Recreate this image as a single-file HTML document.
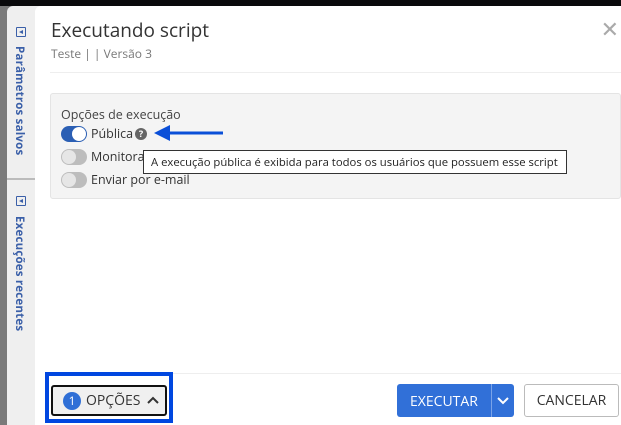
<!DOCTYPE html>
<html><head><meta charset="utf-8"><style>
*{box-sizing:border-box;margin:0;padding:0}
body{width:621px;height:425px;overflow:hidden;background:#6f6f6f;font-family:"Open Sans","Liberation Sans","DejaVu Sans",sans-serif;position:relative}
.top{position:absolute;left:0;top:0;width:621px;height:6px;background:#0a0a0c}
.bgl{position:absolute;left:0;top:6px;width:8px;height:419px;background:#7a7a7a}
.side{position:absolute;left:7px;top:6px;width:34px;height:419px;background:#efefef;border-radius:6px 0 0 0}
.side .sep{position:absolute;left:0;top:172px;width:28px;height:2px;background:#bbb}
.vt{position:absolute;writing-mode:vertical-rl;font-size:11.5px;font-weight:bold;color:#3a5fa8;letter-spacing:.2px}
.ico{position:absolute;width:10px;height:10px;border:1px solid #3a5fa8;border-radius:1px}
.ico:after{content:"";position:absolute;left:2px;top:2px;border-right:4px solid #3a5fa8;border-top:2px solid transparent;border-bottom:2px solid transparent}
.dlg{position:absolute;left:35px;top:6px;width:586px;height:419px;background:#fff;border-radius:6px 0 0 0}
h1{position:absolute;left:16px;top:11px;font-size:19px;font-weight:normal;color:#333}
.sub{position:absolute;left:16px;top:39px;font-size:12px;color:#777}
.x{position:absolute;right:2px;top:12px;font-size:22px;color:#aaa;line-height:1}
.hr{position:absolute;left:15px;right:0;height:1px;background:#eee}
.box{position:absolute;left:15px;top:87px;width:571px;height:106px;background:#f4f4f4;border:1px solid #e4e4e4;border-radius:3px}
.lbl{position:absolute;left:10px;top:12px;font-size:12.5px;color:#444}
.row{position:absolute;left:10px;font-size:12.5px;color:#333;display:flex;align-items:center}
.tg{width:26px;height:16px;border-radius:8px;background:#bdbdbd;position:relative;margin-right:4px}
.tg:after{content:"";position:absolute;left:1px;top:1px;width:14px;height:14px;border-radius:50%;background:#e6e6e6}
.tg.on{background:#2b5fb4}.tg.on:after{left:11px;background:#fff}
.q{display:inline-block;width:12px;height:12px;border-radius:50%;background:#666;color:#fff;font-size:9px;font-weight:bold;text-align:center;line-height:12px;margin-left:2px}
.tip{position:absolute;left:143px;top:150px;width:424px;height:24px;background:#fff;border:1px solid #333;font-size:11.3px;color:#222;padding:4px 7px;white-space:nowrap}
.arrow{position:absolute;left:154px;top:124px}
.hl{position:absolute;left:45px;top:372px;width:128px;height:51px;border:4px solid #0047e0}
.opt{position:absolute;left:51px;top:385px;width:116px;height:31px;border:2px solid #111;border-radius:3px;background:#f0f0f0;font-size:14px;color:#333;display:flex;align-items:center;padding-left:10px}
.badge{width:18px;height:18px;border-radius:50%;background:#2f6fd6;color:#fff;font-size:12px;text-align:center;line-height:18px;margin-right:5px}
.ex{position:absolute;left:397px;top:384px;width:117px;height:33px;background:#3170d8;border-radius:3px;color:#fff;font-size:14px}
.ex span{position:absolute;left:13px;top:8px}
.ex i{position:absolute;left:94px;top:0;width:1px;height:33px;background:#7aa3e8}
.cn{position:absolute;left:524px;top:384px;width:95px;height:33px;border:1px solid #bbb;border-radius:3px;font-size:14px;color:#333;text-align:center;line-height:31px}
</style></head><body>
<div class="top"></div><div class="bgl"></div>
<div class="side">
<div class="ico" style="left:9px;top:21px"></div>
<div class="vt" style="left:5px;top:40px">Parâmetros salvos</div>
<div class="sep"></div>
<div class="ico" style="left:9px;top:190px"></div>
<div class="vt" style="left:5px;top:210px">Execuções recentes</div>
</div>
<div class="dlg">
<h1>Executando script</h1>
<div class="sub">Teste | | Versão 3</div>
<div class="x">✕</div>
<div class="hr" style="top:66px"></div>
<div class="box">
<div class="lbl">Opções de execução</div>
<div class="row" style="top:31px"><div class="tg on"></div>Pública<span class="q">?</span></div>
<div class="row" style="top:54px"><div class="tg"></div>Monitorar</div>
<div class="row" style="top:77px"><div class="tg"></div>Enviar por e-mail</div>
</div>
<div class="hr" style="top:367px"></div>
</div>
<svg class="arrow" width="70" height="18"><path d="M14 9H69" stroke="#0a4fd8" stroke-width="3"/><path d="M0 9L16 1V17Z" fill="#0a4fd8"/></svg>
<div class="tip">A execução pública é exibida para todos os usuários que possuem esse script</div>
<div class="hl"></div>
<div class="opt"><div class="badge">1</div>OPÇÕES <svg width="14" height="10" style="margin-left:6px"><path d="M2 7L7 2L12 7" stroke="#333" stroke-width="2" fill="none"/></svg></div>
<div class="ex"><span>EXECUTAR</span><i></i><svg width="12" height="8" style="position:absolute;left:100px;top:13px"><path d="M1 1L6 6L11 1" stroke="#fff" stroke-width="2" fill="none"/></svg></div>
<div class="cn">CANCELAR</div>
</body></html>
